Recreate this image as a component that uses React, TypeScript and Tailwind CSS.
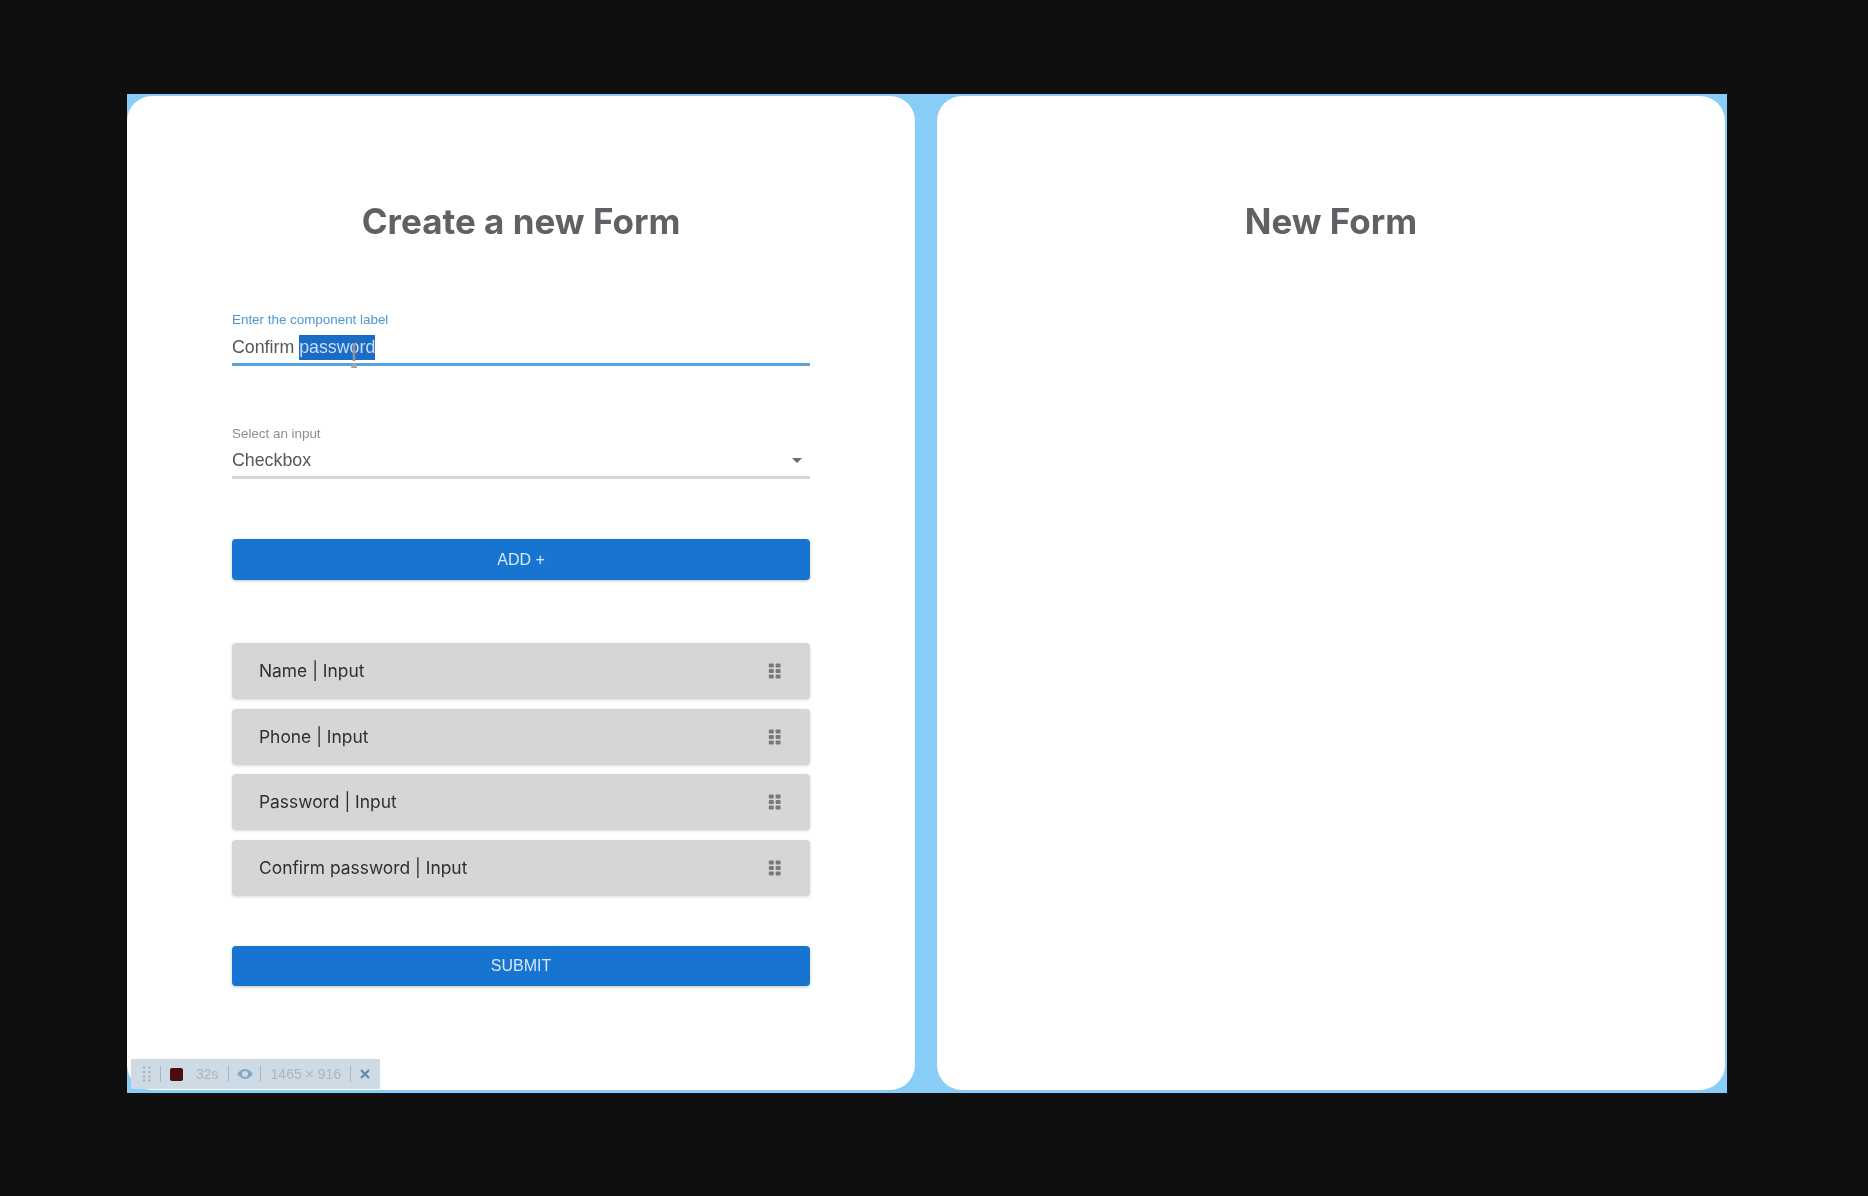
import React from 'react';

const rows = ['Name', 'Phone', 'Password', 'Confirm password'];

const DragDots: React.FC = () => (
    <svg width="14" height="16" viewBox="0 0 14 16" className="fill-[#77797a] -mt-[1px] -mr-[1px]">
        {[0.4, 6, 11.6].map(y => (
            <React.Fragment key={y}>
                <rect x="0.8" y={y} width="5" height="4" rx="1" />
                <rect x="7.6" y={y} width="5" height="4" rx="1" />
            </React.Fragment>
        ))}
    </svg>
);

const Recorder: React.FC = () => (
    <div className="absolute left-1 bottom-[4px] w-[249px] h-[30px] bg-[#cfdbe4] flex items-center pl-[11px] text-[14px] text-[#a9b6c2] font-['Liberation_Sans',sans-serif] blur-[0.6px]">
        <svg width="10" height="16" viewBox="0 0 10 16" className="fill-[#a3b6c8]">
            {[1.5, 6, 10.5, 14.5].map(y => (
                <React.Fragment key={y}>
                    <circle cx="2" cy={y} r="1.3" />
                    <circle cx="7.5" cy={y} r="1.3" />
                </React.Fragment>
            ))}
        </svg>
        <span className="w-[1px] h-4 bg-[#a9b6c2] ml-[8px]" />
        <span className="w-[13px] h-[13px] rounded-[2px] bg-[#4a0d10] ml-[9px]" />
        <span className="ml-[13px]">32s</span>
        <span className="w-[1px] h-4 bg-[#a9b6c2] ml-[9px]" />
        <svg width="18" height="14" viewBox="0 0 18 14" className="ml-[7px]">
            <path d="M1 7Q9-3 17 7 9 17 1 7z" fill="#7fa8cb" />
            <circle cx="9" cy="7" r="3" fill="#cfdbe4" />
        </svg>
        <span className="w-[1px] h-4 bg-[#a9b6c2] ml-[6px]" />
        <span className="ml-[10px] whitespace-nowrap">1465 × 916</span>
        <span className="w-[1px] h-4 bg-[#a9b6c2] ml-[9px]" />
        <svg width="10" height="10" viewBox="0 0 10 10" className="ml-[9px]">
            <path d="M1 1l8 8M9 1l-8 8" stroke="#5a8ab3" strokeWidth="2.2" />
        </svg>
    </div>
);

export default function App() {
    return (
        <div className="min-h-[1196px] bg-[#0f0f0f] pt-[94px] pl-[127px] font-['Inter',sans-serif]">
            <div className="relative w-[1600px] h-[999px] bg-[#88ccf8] pt-[2px] pr-[2px] pb-[3px] flex gap-[22px] overflow-hidden">
                {/* left card */}
                <div className="w-[788px] bg-white rounded-[25px] pt-[103px] px-[105px] blur-[0.7px]">
                    <h1 className="text-[35px] leading-[44px] font-bold text-[#5f6164] text-center">Create a new Form</h1>

                    <div className="mt-[68px] relative font-['Liberation_Sans',sans-serif]">
                        <label className="block text-[13.4px] leading-[18px] text-[#4b98d8]">Enter the component label</label>
                        <div className="mt-[4px] h-[33px] pb-[2px] flex items-center text-[17.8px] text-[#555759] border-b-[3px] border-[#5ba3dc]">
                            <span>Confirm&nbsp;</span>
                            <span className="bg-[#1a6cc4] text-[#c9dcf2] leading-[25px]">password</span>
                        </div>
                        <svg width="10" height="26" viewBox="0 0 10 26" className="absolute left-[117px] top-[32px]">
                            <path d="M5 0v18" stroke="#8d9296" strokeWidth="2.5" />
                            <path d="M1.5 25l3.5-6 3.5 6z" fill="#a5a8aa" />
                        </svg>
                    </div>

                    <div className="mt-[59px] font-['Liberation_Sans',sans-serif]">
                        <label className="block text-[13.4px] leading-[18px] text-[#8c8e90]">Select an input</label>
                        <div className="mt-[5px] h-[31px] pb-[3px] flex items-center justify-between text-[17.8px] text-[#555759] border-b-[3px] border-[#d6d6d6]">
                            <span>Checkbox</span>
                            <span className="w-0 h-0 mr-[8px] border-x-[5px] border-x-transparent border-t-[5px] border-t-[#6b6b6b]" />
                        </div>
                    </div>

                    <button className="mt-[60px] block w-full h-[41px] rounded bg-[#1775d1] text-[16px] text-[#d8e6f5] font-['Liberation_Sans',sans-serif] shadow-[0_1px_3px_rgba(0,0,0,0.25)]">
                        ADD +
                    </button>

                    <div className="mt-[63px] flex flex-col gap-[9.5px]">
                        {rows.map(name => (
                            <div key={name} className="h-[56px] rounded bg-[#d5d6d6] pl-[27px] pr-[29px] pt-[1px] flex items-center justify-between text-[17.4px] text-[#2f2f31] shadow-[0_1px_3px_rgba(0,0,0,0.15)]">
                                <span>{name} | Input</span>
                                <DragDots />
                            </div>
                        ))}
                    </div>

                    <button className="mt-[50.5px] block w-full h-[40px] rounded bg-[#1775d1] text-[16px] text-[#d8e6f5] font-['Liberation_Sans',sans-serif] shadow-[0_1px_3px_rgba(0,0,0,0.25)]">
                        SUBMIT
                    </button>
                </div>

                {/* right card */}
                <div className="w-[788px] bg-white rounded-[25px] pt-[103px] blur-[0.7px]">
                    <h1 className="text-[35px] leading-[44px] font-bold text-[#5f6164] text-center">New Form</h1>
                </div>

                <Recorder />
            </div>
        </div>
    );
}
